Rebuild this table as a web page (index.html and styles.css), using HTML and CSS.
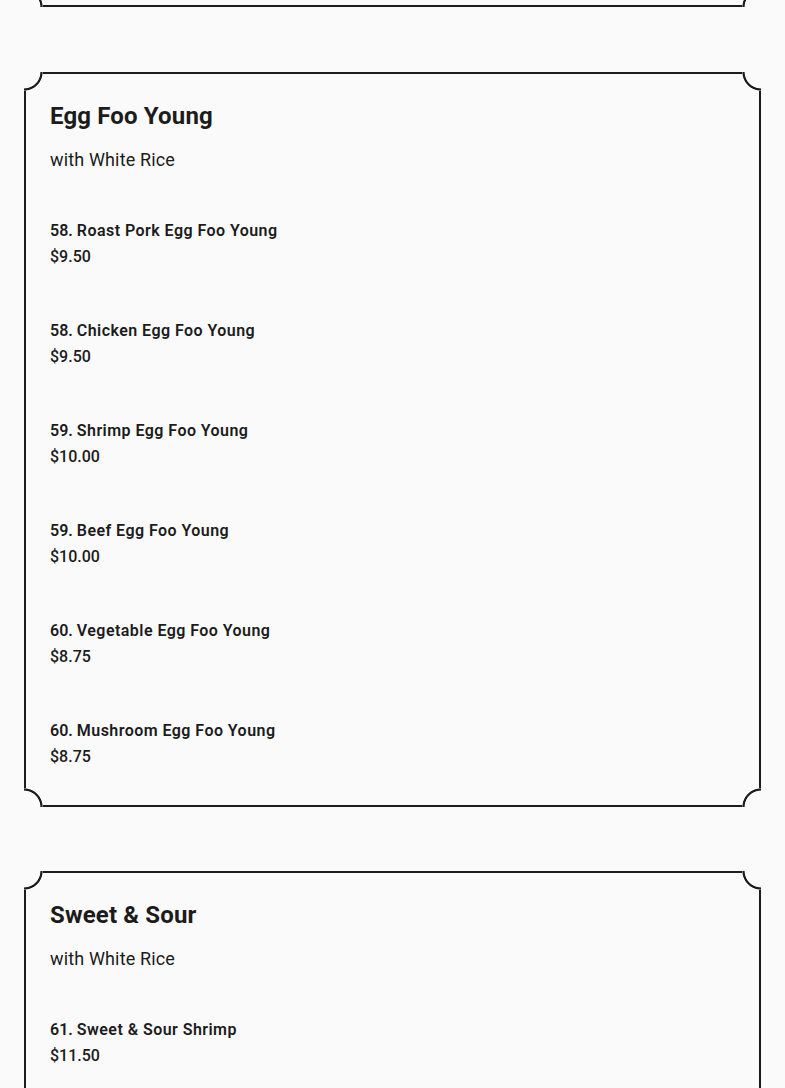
FILE: index.html
```html
<!DOCTYPE html>
<html lang="en">
<head>
<meta charset="utf-8">
<title>Menu</title>
<link rel="stylesheet" href="styles.css">
</head>
<body>
<main class="menu">
  <section class="card card-prev">
    <span class="corner tl"></span><span class="corner tr"></span>
    <span class="corner bl"></span><span class="corner br"></span>
  </section>

  <section class="card">
    <span class="corner tl"></span><span class="corner tr"></span>
    <span class="corner bl"></span><span class="corner br"></span>
    <h2 class="card-title">Egg Foo Young</h2>
    <p class="card-sub">with White Rice</p>
    <ul class="items">
      <li class="item"><span class="item-name"><span class="num">58. </span>Roast Pork Egg Foo Young</span><span class="item-price">$9.50</span></li>
      <li class="item"><span class="item-name"><span class="num">58. </span>Chicken Egg Foo Young</span><span class="item-price">$9.50</span></li>
      <li class="item"><span class="item-name"><span class="num">59. </span>Shrimp Egg Foo Young</span><span class="item-price">$10.00</span></li>
      <li class="item"><span class="item-name"><span class="num">59. </span>Beef Egg Foo Young</span><span class="item-price">$10.00</span></li>
      <li class="item"><span class="item-name"><span class="num">60. </span>Vegetable Egg Foo Young</span><span class="item-price">$8.75</span></li>
      <li class="item"><span class="item-name"><span class="num">60. </span>Mushroom Egg Foo Young</span><span class="item-price">$8.75</span></li>
    </ul>
  </section>

  <section class="card">
    <span class="corner tl"></span><span class="corner tr"></span>
    <span class="corner bl"></span><span class="corner br"></span>
    <h2 class="card-title">Sweet &amp; Sour</h2>
    <p class="card-sub">with White Rice</p>
    <ul class="items">
      <li class="item"><span class="item-name"><span class="num">61. </span>Sweet &amp; Sour Shrimp</span><span class="item-price">$11.50</span></li>
      <li class="item"><span class="item-name"><span class="num">61. </span>Sweet &amp; Sour Chicken</span><span class="item-price">$10.50</span></li>
      <li class="item"><span class="item-name"><span class="num">62. </span>Sweet &amp; Sour Pork</span><span class="item-price">$10.50</span></li>
    </ul>
  </section>
</main>
</body>
</html>
```

FILE: styles.css
```css
html, body {
  margin: 0;
  padding: 0;
  background: #fafafa;
  color: #1c1c1c;
  font-family: Roboto, "Liberation Sans", sans-serif;
}

.menu {
  display: flex;
  flex-direction: column;
  gap: 64px;
  padding: 0 24px;
}

.card {
  position: relative;
  border: 2px solid #1c1c1c;
  background: #fafafa;
  padding: 24px 24px 11px;
}

.card-prev {
  height: 200px;
  margin-top: -197px;
  margin-bottom: 1px;
  padding: 0;
}

.corner {
  position: absolute;
  width: 19px;
  height: 19px;
  background: #fafafa;
}
.corner.tl {
  top: -2px; left: -2px;
  background: radial-gradient(circle at 0 0, #fafafa 16px, #1c1c1c 16.8px, #1c1c1c 18.2px, #fafafa 19px);
}
.corner.tr {
  top: -2px; right: -2px;
  background: radial-gradient(circle at 100% 0, #fafafa 16px, #1c1c1c 16.8px, #1c1c1c 18.2px, #fafafa 19px);
}
.corner.bl {
  bottom: -2px; left: -2px;
  background: radial-gradient(circle at 0 100%, #fafafa 16px, #1c1c1c 16.8px, #1c1c1c 18.2px, #fafafa 19px);
}
.corner.br {
  bottom: -2px; right: -2px;
  background: radial-gradient(circle at 100% 100%, #fafafa 16px, #1c1c1c 16.8px, #1c1c1c 18.2px, #fafafa 19px);
}

.card-title {
  margin: 0 0 12px;
  font-size: 24px;
  line-height: 36px;
  font-weight: 700;
  letter-spacing: 0.15px;
}

.card-sub {
  margin: 0 0 21px;
  font-size: 18px;
  line-height: 27px;
  font-weight: 400;
  letter-spacing: 0.15px;
}

.items {
  list-style: none;
  margin: 0;
  padding: 0;
}

.item {
  display: flex;
  flex-direction: column;
  padding: 24px 0;
}

.item-name {
  font-size: 16px;
  line-height: 26px;
  font-weight: 600;
  letter-spacing: 0.45px;
}

.item-name .num {
  letter-spacing: 0;
}

.item-price {
  font-size: 16px;
  line-height: 26px;
  font-weight: 500;
}
```
